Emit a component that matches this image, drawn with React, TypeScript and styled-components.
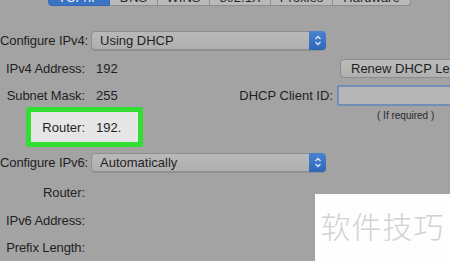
import React from 'react';
import styled, { createGlobalStyle } from 'styled-components';

const GlobalStyle = createGlobalStyle`
  html, body {
    margin: 0;
    padding: 0;
    background: #a3a3a3;
  }
  body {
    font-family: "Liberation Sans", Arial, sans-serif;
  }
`;

const tabs = [
  { name: 'TCP/IP', width: 62 },
  { name: 'DNS', width: 48 },
  { name: 'WINS', width: 52 },
  { name: '802.1X', width: 61 },
  { name: 'Proxies', width: 62 },
  { name: 'Hardware', width: 78 },
];

const Stepper = () => (
  <StepperWrap>
    <svg width="8" height="11" viewBox="0 0 8 11" fill="none">
      <path d="M1.5 4 L4 1.5 L6.5 4" stroke="#dfe8f5" strokeWidth="1.3" />
      <path d="M1.5 7 L4 9.5 L6.5 7" stroke="#dfe8f5" strokeWidth="1.3" />
    </svg>
  </StepperWrap>
);

const App: React.FC = () => (
  <Screen>
    <GlobalStyle />
    <TabBar>
      {tabs.map((t, i) => (
        <Tab key={t.name} active={i === 0} style={{ width: t.width }}>
          {t.name}
        </Tab>
      ))}
    </TabBar>
    <Form>
      <Label>Configure IPv4:</Label>
      <Cell>
        <Popup>
          <span>Using DHCP</span>
          <Stepper />
        </Popup>
      </Cell>
      <Side />

      <Label>IPv4 Address:</Label>
      <Cell><Value>192</Value></Cell>
      <Side><Button>Renew DHCP Lease</Button></Side>

      <Label>Subnet Mask:</Label>
      <Cell>
        <Value>255</Value>
        <SideLabel>DHCP Client ID:</SideLabel>
      </Cell>
      <Side><Field /></Side>

      <RouterCell>
        <Highlight>
          <BoxLabel>Router:</BoxLabel>
          <Value>192.</Value>
        </Highlight>
      </RouterCell>
      <Hint>( If required )</Hint>

      <Label>Configure IPv6:</Label>
      <Cell>
        <Popup>
          <span>Automatically</span>
          <Stepper />
        </Popup>
      </Cell>
      <Side />

      <Label>Router:</Label>
      <Cell />
      <Side />

      <Label>IPv6 Address:</Label>
      <Cell />
      <Side />

      <Label>Prefix Length:</Label>
      <Cell />
      <Side />
    </Form>
    <Watermark>软件技巧</Watermark>
  </Screen>
);

const Screen = styled.div`
  position: relative;
  width: 450px;
  height: 261px;
  overflow: hidden;
  background: #a3a3a3;
  color: #1f1f1f;
  font-size: 13px;
`;

const TabBar = styled.div`
  display: flex;
  margin: -16px 0 0 48px;
  height: 22px;
`;

const Tab = styled.div<{ active: boolean }>`
  box-sizing: border-box;
  display: flex;
  align-items: flex-end;
  justify-content: center;
  padding-bottom: 0;
  font-size: 13px;
  line-height: 15px;
  color: ${({ active }) => (active ? '#e8eef8' : '#2a2a2a')};
  background: ${({ active }) => (active ? '#3a72c4' : '#b9b9b9')};
  border: 1px solid ${({ active }) => (active ? '#3468b5' : '#8d8d8d')};
  border-left-width: ${({ active }) => (active ? '1px' : '0')};
  &:first-child {
    border-radius: 0 0 0 4px;
  }
  &:last-child {
    border-radius: 0 0 4px 0;
  }
`;

const Form = styled.div`
  display: grid;
  grid-template-columns: 85px 252px 1fr;
  grid-template-rows: 25px 31px 23px 40px 31px 28px 28px 27px;
  margin-top: 22px;
`;

const Label = styled.div`
  align-self: center;
  text-align: right;
  white-space: nowrap;
  letter-spacing: -0.1px;
`;

const Cell = styled.div`
  display: flex;
  align-items: center;
  justify-content: space-between;
  min-width: 0;
`;

const Side = styled.div`
  display: flex;
  align-items: center;
  min-width: 0;
`;

const Value = styled.span`
  padding-left: 11px;
`;

const SideLabel = styled.span`
  padding-right: 4px;
  white-space: nowrap;
`;

const Popup = styled.div`
  box-sizing: border-box;
  margin-left: 6px;
  width: 235px;
  height: 19px;
  display: flex;
  align-items: center;
  justify-content: space-between;
  padding-left: 8px;
  background: linear-gradient(#b9b9b9, #afafaf);
  border: 1px solid #8f8f8f;
  border-radius: 4px;
  box-shadow: 0 1px 0 rgba(0, 0, 0, 0.12);
  white-space: nowrap;
`;

const StepperWrap = styled.div`
  width: 17px;
  height: 19px;
  margin: -1px -1px -1px 0;
  border-radius: 0 4px 4px 0;
  background: linear-gradient(#4a82d0, #2f66b8);
  display: flex;
  align-items: center;
  justify-content: center;
`;

const Button = styled.div`
  box-sizing: border-box;
  flex-shrink: 0;
  margin-left: 3px;
  height: 19px;
  padding: 0 10px;
  display: flex;
  align-items: center;
  white-space: nowrap;
  background: linear-gradient(#bcbcbc, #b0b0b0);
  border: 1px solid #8c8c8c;
  border-radius: 4px;
`;

const Field = styled.div`
  box-sizing: border-box;
  flex-shrink: 0;
  width: 140px;
  height: 21px;
  background: #b6b6b6;
  border: 2px solid #6f8fb6;
  border-radius: 2px;
`;

const RouterCell = styled.div`
  grid-column: 1 / 3;
  display: flex;
  align-items: stretch;
`;

const Highlight = styled.div`
  box-sizing: border-box;
  margin-left: 26px;
  width: 117px;
  display: flex;
  align-items: center;
  background: #e6e6e6;
  border: 5px solid #33de33;
  border-radius: 2px;
`;

const BoxLabel = styled.span`
  width: 54px;
  text-align: right;
`;

const Hint = styled.div`
  align-self: start;
  margin-top: 3px;
  padding-left: 40px;
  font-size: 10px;
  color: #2a2a2a;
  white-space: nowrap;
`;

const Watermark = styled.div`
  position: absolute;
  left: 315px;
  top: 194px;
  width: 135px;
  height: 67px;
  background: #fefefe;
  display: flex;
  align-items: center;
  justify-content: center;
  padding-bottom: 6px;
  box-sizing: border-box;
  font-family: "Noto Sans CJK SC", sans-serif;
  font-weight: 300;
  font-size: 30px;
  letter-spacing: 1px;
  color: #d2d2d2;
`;

export default App;
